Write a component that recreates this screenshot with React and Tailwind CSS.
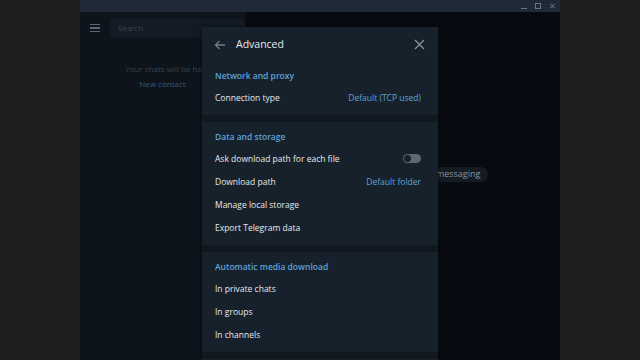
import React from 'react';

function Row({ label, value, toggle }) {
  return (
    <div className="h-[23px] flex items-center justify-between pl-[13px] pr-[17px] pt-[2px] text-[8.5px] text-[#e6e9ec]">
      <span>{label}</span>
      {value && <span className="text-[#5ea2da]">{value}</span>}
      {toggle && (
        <span className="w-[18px] h-[9px] rounded-full bg-[#5f6872] flex items-center px-[1px] mt-[-2px]">
          <span className="w-[7px] h-[7px] rounded-full bg-[#17212b]" />
        </span>
      )}
    </div>
  );
}

function Section({ title, children }) {
  return (
    <div className="pt-[6px] pb-[6px]">
      <div className="h-4 flex items-center px-[13px] pt-[2px] text-[8.5px] font-semibold text-[#5ea2da]">{title}</div>
      <div className="mt-[3px]">{children}</div>
    </div>
  );
}

export default function App() {
  return (
    <div className="w-[640px] h-[360px] bg-[#1e1e1e] flex justify-center overflow-hidden" style={{ fontFamily: '"Open Sans", sans-serif' }}>
      <div className="relative w-[480px] h-full flex flex-col">
        <div className="h-[12px] bg-[#202a36] flex items-center justify-end gap-[8px] pr-[4px] text-[#6c7680]">
          <span className="w-[6px] h-[1px] bg-[#6c7680] mt-[5px]" />
          <span className="w-[6px] h-[6px] border border-[#6c7680]" />
          <span className="text-[8px] leading-none">✕</span>
        </div>
        <div className="flex-1 flex">
          <div className="w-[165px] bg-[#0e141b] flex flex-col">
            <div className="h-[30px] flex items-center pl-[10px] gap-[10px] mt-[1px]">
              <div className="flex flex-col gap-[2px]">
                <span className="w-[10px] h-[1.5px] bg-[#5d6570]" />
                <span className="w-[10px] h-[1.5px] bg-[#5d6570]" />
                <span className="w-[10px] h-[1.5px] bg-[#5d6570]" />
              </div>
              <div className="flex-1 h-[19px] bg-[#131b24] rounded-[3px] flex items-center pl-[8px] text-[8px] text-[#3d4753]">Search</div>
            </div>
            <div className="mt-[18px] text-center text-[8px] text-[#3a444e] leading-[15px]">
              <div className="pl-[10px]">Your chats will be here</div>
              <div className="text-[#35597a]">New contact</div>
            </div>
          </div>
          <div className="flex-1 bg-[#070b11] flex items-center justify-center">
            <div className="mt-[-24px] ml-[-5px] px-[8px] h-[15px] rounded-full bg-[#141b23] text-[9px] text-[#8a939c] flex items-center">
              Please select a chat to start messaging
            </div>
          </div>
        </div>
        <div className="absolute left-[122px] top-[27px] w-[236px] h-[340px] bg-[#17212b] shadow-[0_0_6px_rgba(0,0,0,0.5)]">
          <div className="h-[34px] flex items-center px-[12px] pt-[1px] gap-[10px]">
            <svg width="12" height="12" viewBox="0 0 12 12" fill="none" stroke="#737d87" strokeWidth="1.3">
              <path d="M11 6H1.5M5.5 2L1.5 6l4 4" />
            </svg>
            <span className="text-[10.5px] text-[#e6e9ec] font-medium flex-1">Advanced</span>
            <svg width="11" height="11" viewBox="0 0 11 11" fill="none" stroke="#8a939c" strokeWidth="1.3" className="mr-[1px]">
              <path d="M1 1l9 9M10 1l-9 9" />
            </svg>
          </div>
          <Section title="Network and proxy">
            <Row label="Connection type" value="Default (TCP used)" />
          </Section>
          <div className="h-[7px] bg-[#111820]" />
          <Section title="Data and storage">
            <Row label="Ask download path for each file" toggle />
            <Row label="Download path" value="Default folder" />
            <Row label="Manage local storage" />
            <Row label="Export Telegram data" />
          </Section>
          <div className="h-[7px] bg-[#111820]" />
          <Section title="Automatic media download">
            <Row label="In private chats" />
            <Row label="In groups" />
            <Row label="In channels" />
          </Section>
          <div className="h-[7px] bg-[#111820]" />
        </div>
      </div>
    </div>
  );
}
